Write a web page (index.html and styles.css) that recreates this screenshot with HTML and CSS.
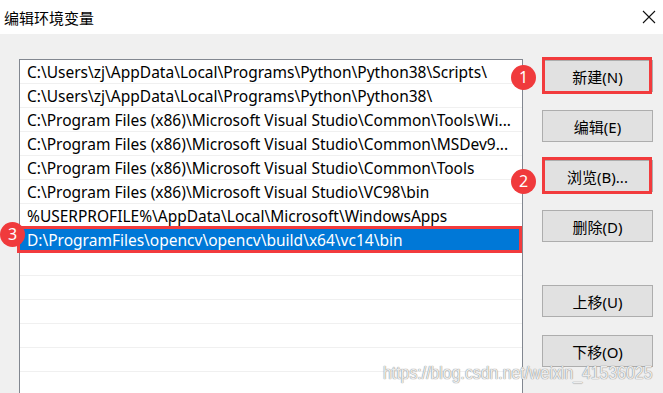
FILE: index.html
```html
<!DOCTYPE html>
<html>
<head>
    <title>编辑环境变量</title>
    <link rel="stylesheet" href="styles.css">
</head>
<body>
    <div class="titlebar">
        <span class="title">编辑环境变量</span>
        <svg class="close" width="14" height="14" viewBox="0 0 14 14">
            <path d="M1 1 L13 13 M13 1 L1 13" stroke="#111" stroke-width="1.1" fill="none"/>
        </svg>
    </div>

    <div class="dialog">
        <div class="path-list">
            <div class="row">C:\Users\zj\AppData\Local\Programs\Python\Python38\Scripts\</div>
            <div class="row">C:\Users\zj\AppData\Local\Programs\Python\Python38\</div>
            <div class="row">C:\Program Files (x86)\Microsoft Visual Studio\Common\Tools\Wi...</div>
            <div class="row">C:\Program Files (x86)\Microsoft Visual Studio\Common\MSDev9...</div>
            <div class="row">C:\Program Files (x86)\Microsoft Visual Studio\Common\Tools</div>
            <div class="row">C:\Program Files (x86)\Microsoft Visual Studio\VC98\bin</div>
            <div class="row">%USERPROFILE%\AppData\Local\Microsoft\WindowsApps</div>
            <div class="row selected">
                D:\ProgramFiles\opencv\opencv\build\x64\vc14\bin
                <span class="mark mark-row"></span>
                <span class="badge badge-3">3</span>
            </div>
            <div class="row"></div>
            <div class="row"></div>
            <div class="row"></div>
            <div class="row"></div>
            <div class="row"></div>
        </div>

        <div class="buttons">
            <div class="btn">
                新建(N)
                <span class="mark mark-btn"></span>
                <span class="badge badge-1">1</span>
            </div>
            <div class="btn">编辑(E)</div>
            <div class="btn">
                浏览(B)...
                <span class="mark mark-btn"></span>
                <span class="badge badge-2">2</span>
            </div>
            <div class="btn">删除(D)</div>
            <div class="btn btn-move">上移(U)</div>
            <div class="btn">下移(O)</div>
        </div>
    </div>

    <div class="watermark">https://blog.csdn.net/weixin_41536025</div>
</body>
</html>
```

FILE: styles.css
```css
body {
    margin: 0;
    padding: 0;
    height: 393px;
    overflow: hidden;
    position: relative;
    font-family: "Noto Sans", "Noto Sans CJK SC", sans-serif;
    background-color: #f0f0f0;
    color: #000;
}

.titlebar {
    height: 34px;
    background-color: #fff;
    display: flex;
    align-items: center;
    justify-content: space-between;
    padding: 0 7px 0 4px;
}

.titlebar .title {
    font-family: "Noto Sans CJK SC", sans-serif;
    font-size: 15px;
}

.dialog {
    display: flex;
    align-items: flex-start;
    padding: 25px 0 0 19px;
}

.path-list {
    width: 504px;
    height: 334px;
    box-sizing: border-box;
    border: 1px solid #828790;
    border-bottom: none;
    background-color: #fff;
}

.row {
    position: relative;
    height: 23px;
    line-height: 25px;
    padding-left: 7px;
    border-bottom: 1px solid #f0f0f0;
    font-size: 15.5px;
    white-space: nowrap;
}

.row.selected {
    background-color: #0078d7;
    color: #fff;
}

.buttons {
    display: flex;
    flex-direction: column;
    margin-left: 19px;
    padding-top: 1px;
    width: 111px;
}

.btn {
    position: relative;
    height: 32px;
    box-sizing: border-box;
    margin-bottom: 18px;
    border: 1px solid #adadad;
    background-color: #e1e1e1;
    display: flex;
    align-items: center;
    justify-content: center;
    font-size: 15px;
}

.btn-move {
    margin-top: 25px;
}

/* red annotation boxes and numbered circles */
.mark {
    position: absolute;
    border: 3px solid #f23b3d;
}

.mark-btn {
    top: -4px;
    bottom: -3px;
    left: -1px;
    right: 0;
}

.mark-row {
    top: -2px;
    bottom: -2px;
    left: -3px;
    right: 0;
}

.badge {
    position: absolute;
    width: 25px;
    height: 25px;
    border-radius: 50%;
    background-color: #f03a3c;
    color: #fff;
    font-size: 16px;
    line-height: 25px;
    text-align: center;
}

.badge-1 {
    left: -32px;
    top: 4px;
}

.badge-2 {
    left: -32px;
    top: 8px;
}

.badge-3 {
    left: -20px;
    top: -6px;
}

.watermark {
    position: absolute;
    left: 383px;
    top: 363px;
    font-family: "Liberation Sans", sans-serif;
    font-size: 18px;
    transform: scaleX(0.88);
    transform-origin: left center;
    color: rgba(255, 255, 255, 0.85);
    text-shadow: 0 0 1px #8a8a8a, 0 0 1px #8a8a8a;
    white-space: nowrap;
}
```
